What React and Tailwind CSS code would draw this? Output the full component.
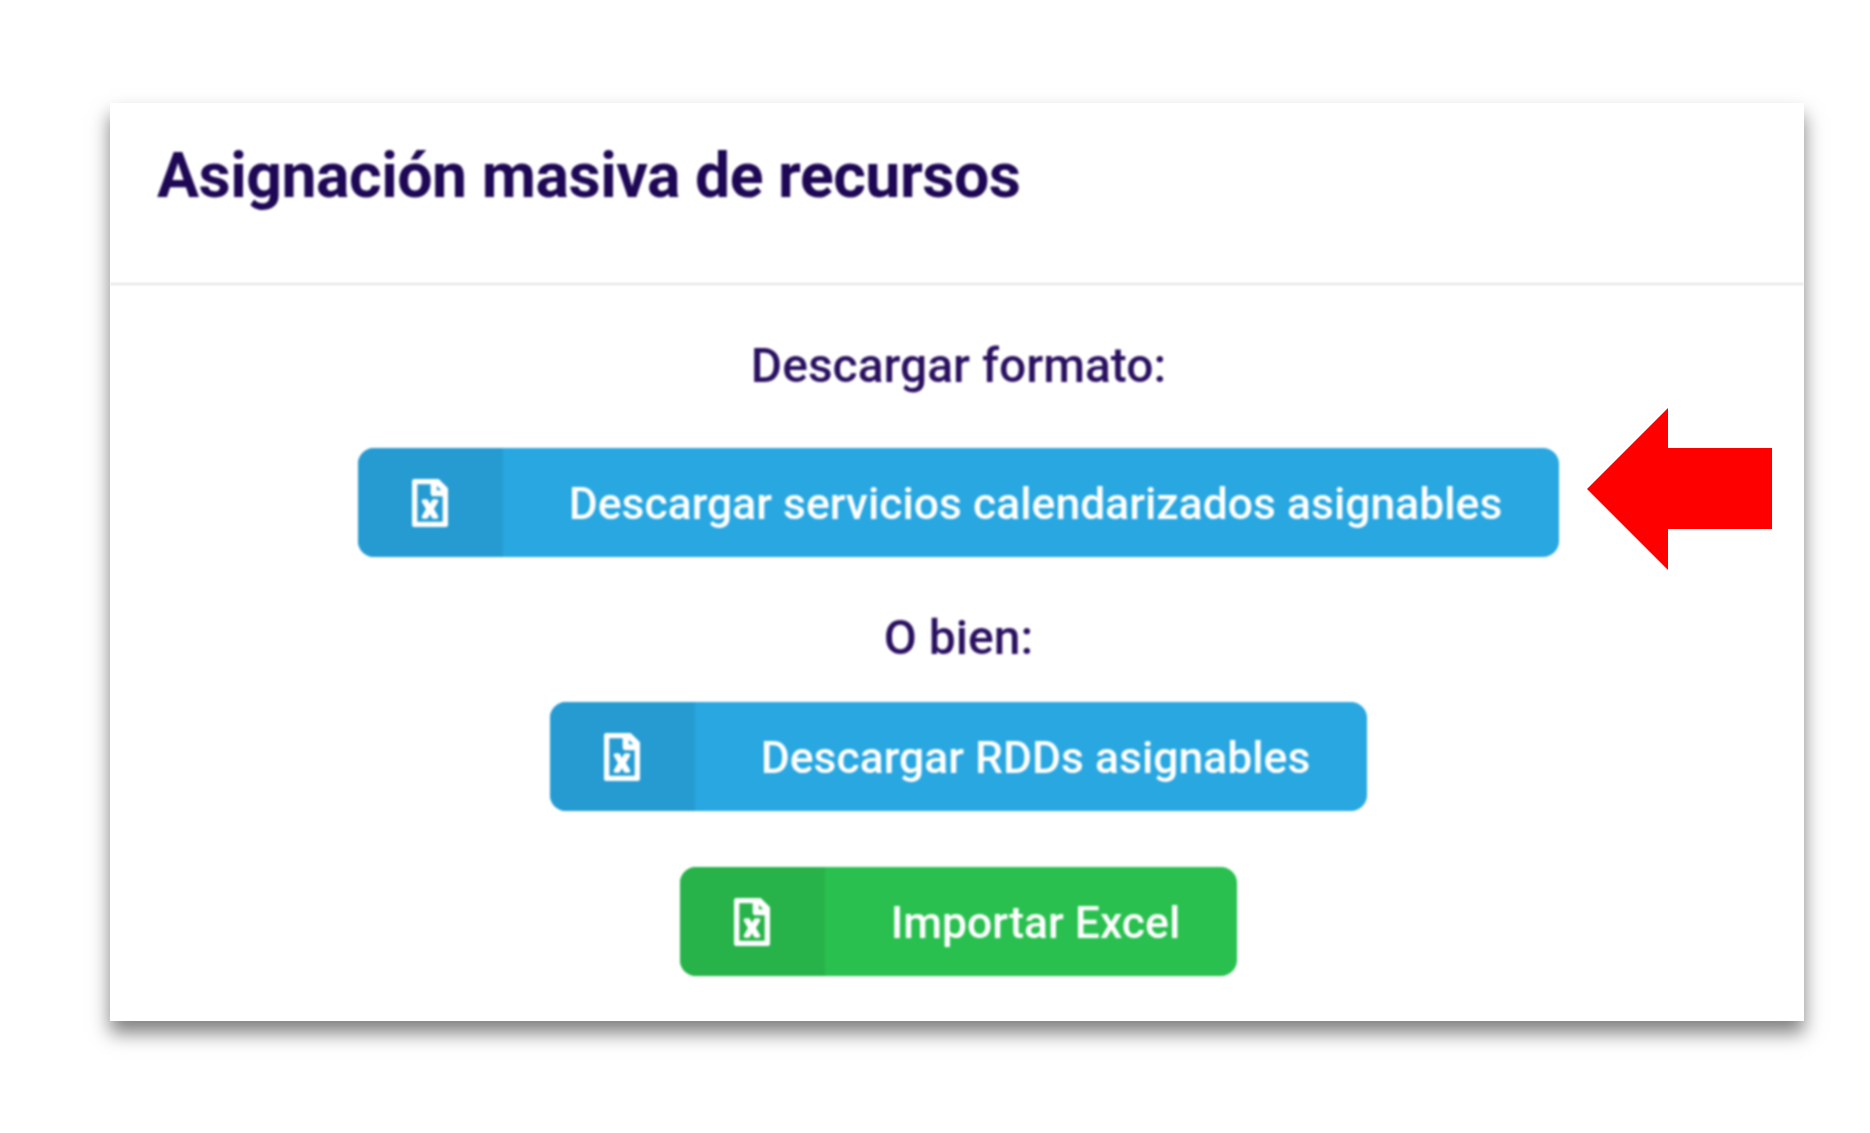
import React from "react";
import { FaRegFileExcel } from "react-icons/fa";

function IconButton({ label, green }) {
  return (
    <button
      className={
        "flex h-[109px] items-stretch overflow-hidden rounded-[16px] text-white " +
        (green ? "bg-[#29c04f]" : "bg-[#29a7e1]")
      }
    >
      <span
        className={
          "flex w-[145px] items-center justify-center " +
          (green ? "bg-[#27b349]" : "bg-[#269bd2]")
        }
      >
        <FaRegFileExcel className="h-12 w-9 stroke-[18]" />
      </span>
      <span className="flex items-center whitespace-nowrap pl-[66px] pr-[57px] pt-[4px] text-[44.5px] font-medium">
        {label}
      </span>
    </button>
  );
}

export default function App() {
  return (
    <div className="h-[1133px] w-[1870px] overflow-hidden bg-white pl-[110px] pt-[103px] font-['Roboto',sans-serif]">
      <div className="relative h-[918px] w-[1694px] bg-white text-[#2a1160] shadow-[0_12px_18px_rgba(0,0,0,0.5)]">
        <div className="blur-[1px]">
          <div className="flex h-[182px] items-start border-b-2 border-[#e3e3e3] px-[47px] pt-[38px]">
            <h1 className="text-[62.6px] font-bold leading-[70px] tracking-[-0.5px] text-[#1e0855]">Asignación masiva de recursos</h1>
          </div>
          <div className="flex flex-col items-center pl-[3px]">
            <p className="mt-[53px] text-[48px] font-medium leading-[56px]">Descargar formato:</p>
            <div className="mt-[54px]">
              <IconButton label="Descargar servicios calendarizados asignables" />
            </div>
            <p className="mt-[53px] text-[48px] font-medium leading-[56px]">O bien:</p>
            <div className="mt-[36px]">
              <IconButton label="Descargar RDDs asignables" />
            </div>
            <div className="mt-[56px]">
              <IconButton label="Importar Excel" green />
            </div>
          </div>
        </div>
        {/* red arrow drawn on top of the screenshot */}
        <svg className="absolute left-[1477px] top-[305px]" width="185" height="162" viewBox="0 0 185 162">
          <polygon points="0,81 81,0 81,40 185,40 185,121 81,121 81,162" fill="#ff0000" />
        </svg>
      </div>
    </div>
  );
}
